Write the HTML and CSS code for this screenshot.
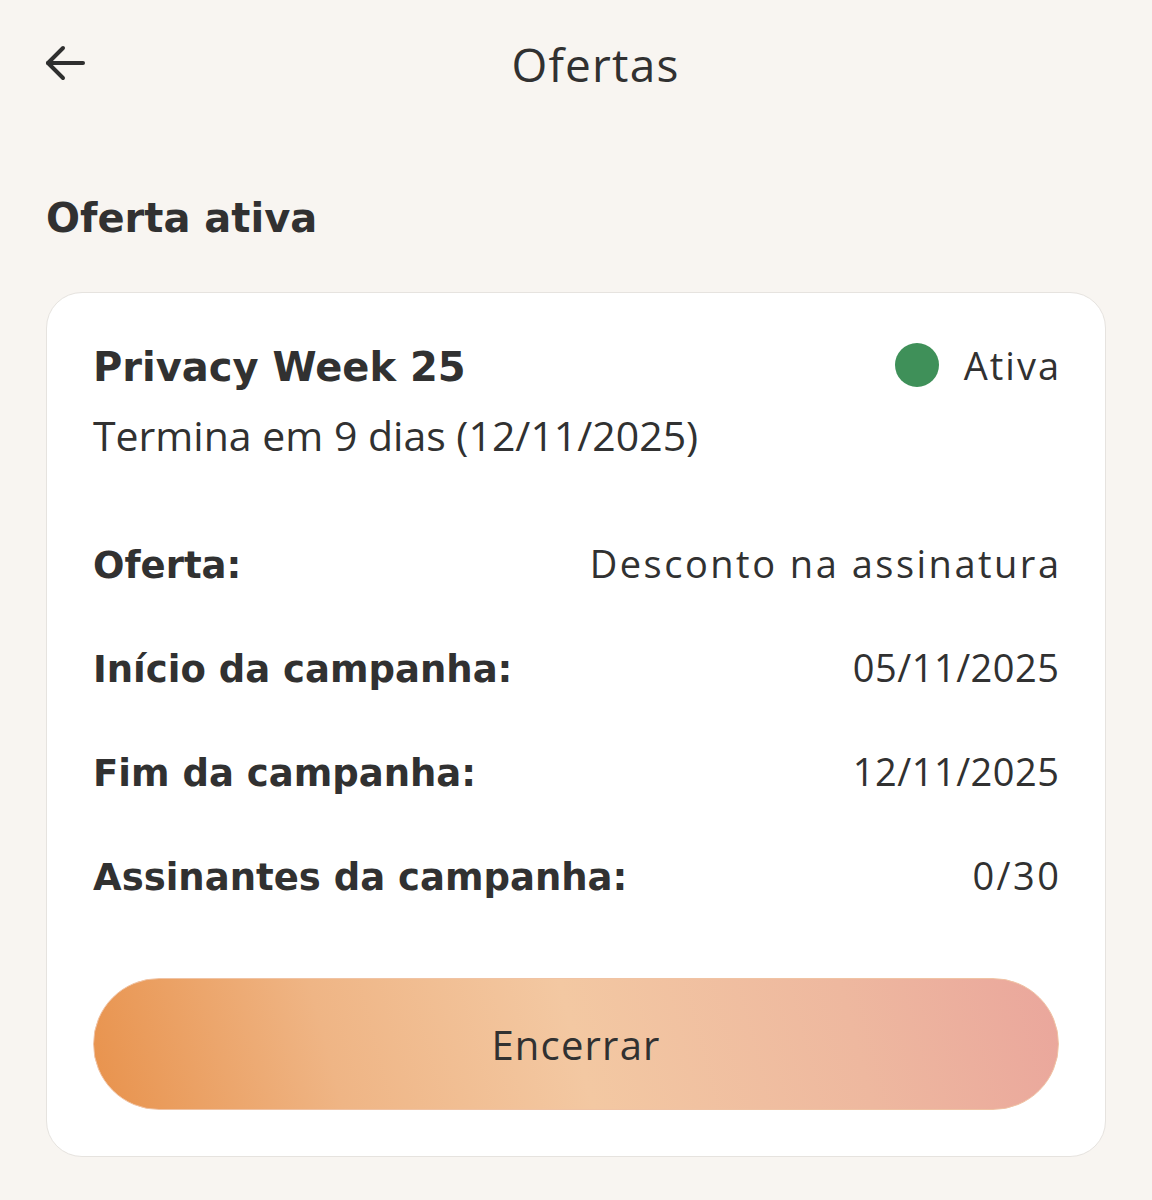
FILE: index.html
```html
<!DOCTYPE html>
<html lang="pt">
<head>
    <meta charset="UTF-8">
    <meta name="viewport" content="width=device-width, initial-scale=1.0">
    <title>Ofertas</title>
    <link rel="stylesheet" href="styles.css">
</head>
<body>
    <div class="topbar">
        <button class="back" aria-label="Voltar">
            <svg width="40" height="40" viewBox="0 0 40 40" fill="none" stroke="#2f2f2f" stroke-width="4" stroke-linecap="round" stroke-linejoin="round">
                <path d="M38 19H3"/>
                <path d="M18 4L3 19L18 34"/>
            </svg>
        </button>
        <h1 class="title">Ofertas</h1>
    </div>

    <div class="page">
        <h2 class="section">Oferta ativa</h2>

        <div class="card">
            <div class="card-head">
                <div class="card-name">Privacy Week 25</div>
                <div class="status"><span class="dot"></span>Ativa</div>
            </div>
            <div class="ends">Termina em 9 dias (12/11/2025)</div>

            <div class="rows">
                <div class="row"><span class="label">Oferta:</span><span class="value">Desconto na assinatura</span></div>
                <div class="row"><span class="label">Início da campanha:</span><span class="value num">05/11/2025</span></div>
                <div class="row"><span class="label">Fim da campanha:</span><span class="value num">12/11/2025</span></div>
                <div class="row"><span class="label">Assinantes da campanha:</span><span class="value">0/30</span></div>
            </div>

            <button class="btn-end">Encerrar</button>
        </div>
    </div>
</body>
</html>
```

FILE: styles.css
```css
body {
    margin: 0;
    background: #f8f5f1;
    font-family: "Open Sans", sans-serif;
    color: #313131;
}
.topbar {
    display: flex;
    align-items: center;
    height: 127px;
    padding: 0 46px 0 45px;
}
.back {
    width: 40px;
    height: 40px;
    padding: 0;
    border: none;
    background: none;
    display: flex;
}
.title {
    flex: 1;
    margin: 0;
    text-align: center;
    font-size: 46px;
    font-weight: 400;
    letter-spacing: 1.2px;
}
.page {
    padding: 0 46px;
}
.section, .card-name, .label {
    font-family: "DejaVu Sans", sans-serif;
    font-weight: 700;
}
.section {
    margin: 0;
    padding-top: 63px;
    height: 165px;
    box-sizing: border-box;
    font-size: 40px;
    line-height: 56px;
}
.card {
    background: white;
    border: 1px solid #e6e3df;
    border-radius: 36px;
    padding: 40px 46px 46px;
}
.card-head {
    display: flex;
    justify-content: space-between;
    align-items: center;
    height: 64px;
}
.card-name {
    font-size: 40px;
    margin-top: 3px;
}
.status {
    display: flex;
    align-items: center;
    font-size: 38px;
    letter-spacing: 2px;
    margin-right: -2px;
}
.dot {
    width: 44px;
    height: 44px;
    border-radius: 50%;
    background: #3f9059;
    margin-right: 25px;
}
.ends {
    font-size: 41px;
    line-height: 50px;
    margin-top: 13px;
}
.rows {
    margin-top: 51px;
}
.row {
    display: flex;
    justify-content: space-between;
    align-items: center;
    height: 104px;
    font-size: 38px;
}
.label {
    font-size: 37px;
    margin-top: 4px;
}
.value {
    letter-spacing: 2.5px;
    margin-right: -2.5px;
}
.value.num {
    letter-spacing: 0.5px;
    margin-right: -0.5px;
}
.btn-end {
    display: block;
    width: 100%;
    height: 132px;
    margin-top: 51px;
    border: 1px solid #f0c3a4;
    border-radius: 66px;
    background: linear-gradient(75deg, #e8924c 0%, #efb585 25%, #f3c8a2 50%, #eeb89f 78%, #eaa69c 100%);
    font-family: inherit;
    font-size: 40px;
    letter-spacing: 1.2px;
    color: #313131;
}
```
